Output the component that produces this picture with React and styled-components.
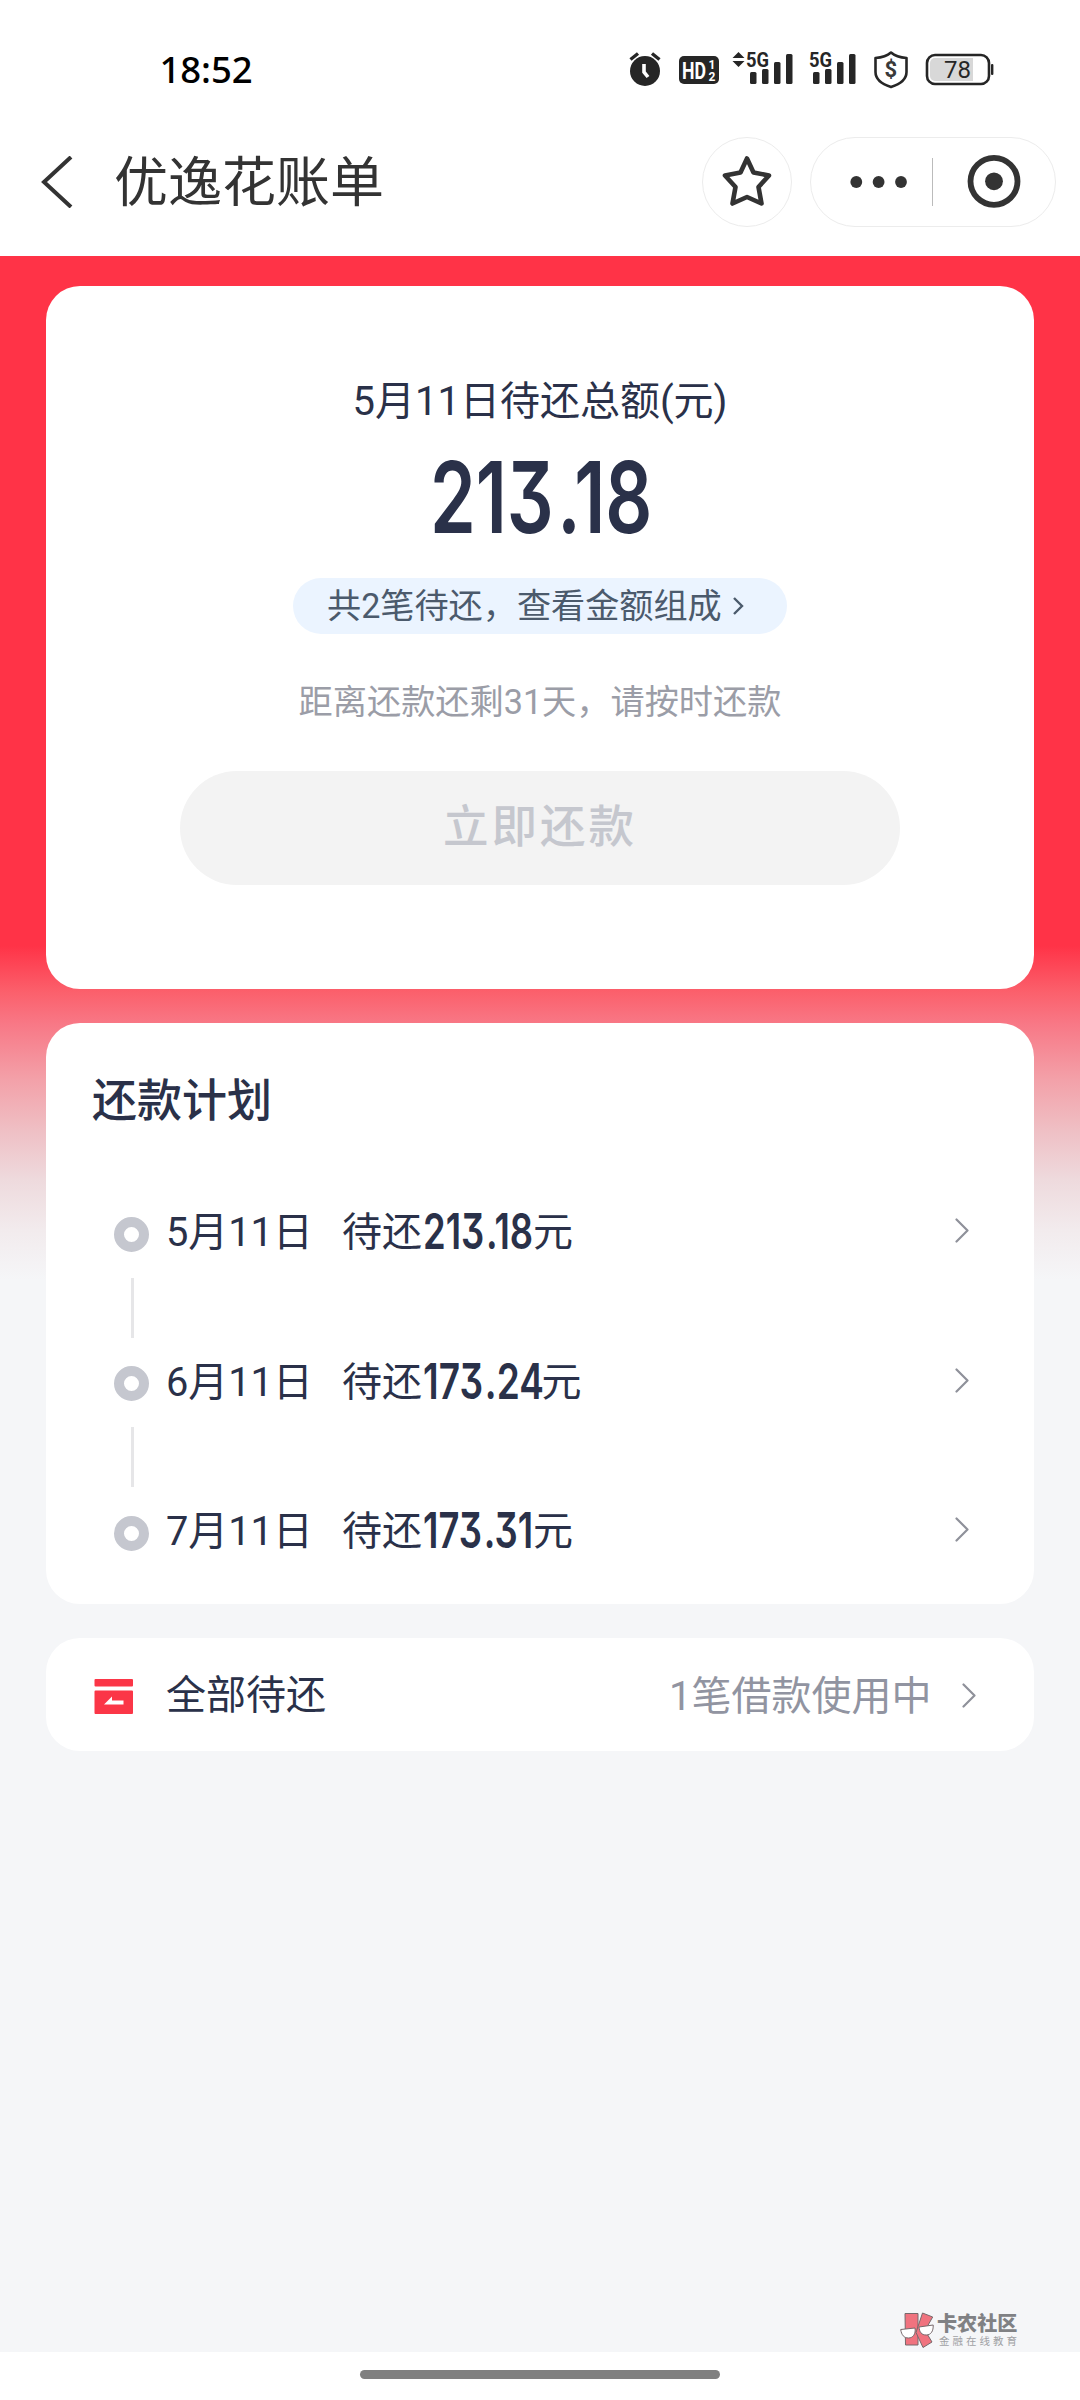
import React from "react";
import styled, { createGlobalStyle } from "styled-components";

const GlobalStyle = createGlobalStyle`
  * { box-sizing: border-box; }
  html, body { margin: 0; padding: 0; background: #fff; }
  body { font-family: Roboto, "Noto Sans CJK SC", sans-serif; color: #2a3149; }
`;

const Screen = styled.div`
  position: relative;
  width: 1080px;
  height: 2400px;
  display: flex;
  flex-direction: column;
  background: #fff;
  overflow: hidden;
`;

const StatusBar = styled.header`
  height: 137px;
  padding: 47px 84px 0 159.5px;
  display: flex;
  justify-content: space-between;
  align-items: flex-start;
`;

const Clock = styled.time`
  margin-top: -1px;
  font: 500 36.5px/46px "Noto Sans", sans-serif;
  letter-spacing: -0.1px;
  color: #000;
`;

const StatusIcons = styled.div`
  display: flex;
  height: 46px;
  svg { display: block; }
`;

const NavBar = styled.nav`
  height: 119px;
  padding: 0 24px 0 41px;
  display: flex;
  align-items: flex-start;
`;

const BackIcon = styled.svg`
  width: 32px;
  height: 52px;
  margin-top: 19px;
`;

const Title = styled.h1`
  flex: 1;
  margin: 2px 0 0 41px;
  font-weight: 400;
  font-size: 54px;
  line-height: 90px;
  color: #333;
`;

const RoundButton = styled.div`
  width: 90px;
  height: 90px;
  border: 1px solid #ececec;
  border-radius: 45px;
  svg { display: block; }
`;

const Capsule = styled(RoundButton)`
  width: 246px;
  margin-left: 18px;
`;

const Content = styled.main`
  height: 2096px;
  padding: 30px 46px 0;
  display: flex;
  flex-direction: column;
  gap: 34px;
  background: linear-gradient(
    180deg,
    #ff3347 0,
    #ff3347 690px,
    #fb5f6b 735px,
    #f87886 768px,
    #f3a1a9 824px,
    #efbfc4 874px,
    #eedadd 924px,
    #f2ebed 974px,
    #f5f6f8 1024px
  );
`;

const Card = styled.section`
  height: ${(p) => p.$height}px;
  border-radius: 34px;
  background: #fff;
  flex: none;
`;

const SummaryCard = styled(Card)`
  display: flex;
  flex-direction: column;
  align-items: center;
`;

const SummaryLabel = styled.p`
  margin: 86px 0 0;
  font-size: 40px;
  line-height: 60px;
`;

const TotalBox = styled.div`
  width: 220px;
  height: 72px;
  margin: 29px 0 45px;
  display: flex;
  align-items: center;
`;

const Amount = styled.span`
  flex: none;
  display: inline-block;
  white-space: nowrap;
  font-family: Inter, sans-serif;
  font-size: ${(p) => p.$size}px;
  line-height: 1;
  font-weight: 600;
  font-feature-settings: "cv09";
  transform: scaleX(${(p) => p.$squeeze});
  transform-origin: 0 50%;
`;

const Point = styled.span`
  margin: 0 0 0 0.05em;
`;

const Pill = styled.div`
  width: 494px;
  height: 56px;
  padding: 0 0 0 34px;
  display: flex;
  align-items: center;
  gap: 11px;
  border-radius: 28px;
  background: #ebf4ff;
  font-size: 34.15px;
  line-height: 57px;
  color: #4b5a6c;
`;

const Reminder = styled.p`
  margin: 43px 0 0;
  font-size: 34.2px;
  line-height: 50px;
  color: #9b9da7;
`;

const PayButton = styled.button`
  width: 720px;
  height: 114px;
  margin: 44px 0 0;
  padding: 0 0 1px 0;
  border: 0;
  border-radius: 57px;
  background: #f3f3f3;
  font: 500 45.5px/60px Roboto, "Noto Sans CJK SC", sans-serif;
  letter-spacing: 3px;
  color: #c5c7ce;
`;

const PlanTitle = styled.h2`
  margin: 0;
  padding: 47px 0 0 46px;
  font-size: 45px;
  line-height: 64px;
  font-weight: 500;
`;

const Timeline = styled.ol`
  list-style: none;
  margin: 0;
  padding: 63px 65px 0 67px;
`;

const PlanRow = styled.li`
  height: 149.5px;
  display: flex;
  align-items: flex-start;
`;

const Rail = styled.div`
  width: 36px;
  padding-top: 19.5px;
  display: flex;
  flex-direction: column;
  align-items: center;
`;

const Dot = styled.span`
  width: 35px;
  height: 35px;
  border: 10.5px solid #c5c7cf;
  border-radius: 50%;
`;

const Stem = styled.span`
  width: 3px;
  height: 60px;
  margin-top: 26px;
  margin-left: 3px;
  background: #e6e6e8;
`;

const DueDate = styled.span`
  width: 176px;
  margin-left: 17px;
  font-size: 39.8px;
  line-height: 72px;
`;

const DueAmount = styled.span`
  flex: 1;
  display: flex;
  align-items: center;
  font-size: 40px;
  line-height: 72px;
`;

const AmountSlot = styled.span`
  width: ${(p) => p.$width}px;
  padding: 0 0 2px 1px;
  display: flex;
  overflow: visible;
`;

const RowArrow = styled.svg`
  width: 14px;
  height: 26px;
  flex: none;
  margin-top: ${(p) => p.$top || 0}px;
`;

const AllCard = styled(Card)`
  display: flex;
  align-items: center;
  padding: 2px 58.5px 0 48px;
  font-size: 40px;
  line-height: 60px;
`;

const CardIcon = styled.svg`
  width: 39px;
  height: 35px;
  margin-top: 1px;
`;

const AllLabel = styled.span`
  flex: 1;
  margin-left: 33px;
`;

const AllStatus = styled.span`
  margin: 2px 30px 0 0;
  color: #9194a1;
`;

const HomeArea = styled.footer`
  flex: 1;
  display: flex;
  justify-content: center;
  padding-top: 18px;
`;

const HomeBar = styled.span`
  width: 360px;
  height: 9px;
  border-radius: 5px;
  background: #808080;
`;

const Watermark = styled.aside`
  position: absolute;
  left: 900px;
  top: 2311px;
  display: flex;
  gap: 2px;
`;

const WatermarkText = styled.div`
  display: flex;
  flex-direction: column;
  white-space: nowrap;
  padding-top: 1px;
`;

const WatermarkName = styled.strong`
  font-size: 20.1px;
  line-height: 24px;
  font-weight: 900;
  color: #808184;
`;

const WatermarkTag = styled.span`
  padding-left: 2px;
  font-size: 10.5px;
  line-height: 12px;
  letter-spacing: 3px;
  color: #a0a1a4;
`;

function Signal({ x }) {
  return (
    <g>
      <text x={x - 4} y="20" fontSize="21" fontWeight="700" textLength="23" lengthAdjust="spacingAndGlyphs">5G</text>
      <rect x={x} y="25" width="6.5" height="12" rx="1.5" />
      <rect x={x + 12} y="22" width="6.5" height="15" rx="1.5" />
      <rect x={x + 24} y="15" width="6.5" height="22" rx="1.5" />
      <rect x={x + 36} y="7" width="6.5" height="30" rx="1.5" />
    </g>
  );
}

function StatusGlyphs() {
  return (
    <svg width="368" height="46" viewBox="0 0 368 46" fill="#262626" fontFamily="Roboto, sans-serif">
      <circle cx="17" cy="24" r="15" />
      <path d="M2.5 12.5 10 6.5M31.5 12.5 24 6.5" stroke="#262626" strokeWidth="3.4" />
      <path d="M16 17v8l4 5" stroke="#fff" strokeWidth="3.6" fill="none" />
      <rect x="51" y="9" width="40" height="28" rx="5" />
      <text x="54" y="31.5" fontSize="23" fontWeight="700" fill="#fff" textLength="24" lengthAdjust="spacingAndGlyphs">HD</text>
      <text x="80.5" y="21.5" fontSize="12" fontWeight="700" fill="#fff">1</text>
      <text x="80.5" y="34" fontSize="12" fontWeight="700" fill="#fff">2</text>
      <path d="m110.500 5 6 6h-12zM110.500 20l6-6h-12z" />
      <Signal x={122} />
      <Signal x={185} />
      <path d="M263 5.500c4 3.500 9 5 15.500 5.500v14c0 7-6 12-15.500 15-9.500-3-15.500-8-15.500-15V11c6.500-.5 11.500-2 15.500-5.500z" fill="none" stroke="#262626" strokeWidth="2.6" strokeLinejoin="round" />
      <text x="256.500" y="30" fontSize="22" fontWeight="700" fill="#3a3a3a">$</text>
      <rect x="299" y="8" width="62" height="29" rx="8" fill="#fff" stroke="#262626" strokeWidth="2.600" />
      <path d="M307 11h38v23h-38a5 5 0 0 1-5-5V16a5 5 0 0 1 5-5z" fill="#d8d8d8" />
      <rect x="363" y="17" width="2.400" height="11" rx="1" />
      <text x="316" y="31" fontSize="24">78</text>
    </svg>
  );
}

function Arrow({ top }) {
  return (
    <RowArrow $top={top} viewBox="0 0 14 26" fill="none" stroke="#8f919a" strokeWidth="2.200" strokeLinecap="round" strokeLinejoin="round">
      <path d="M1.500 1.500 12.500 12.500 1.500 23.500" />
    </RowArrow>
  );
}

function Money({ value, size, squeeze }) {
  const [whole, cents] = value.split(".");
  return (
    <Amount $size={size} $squeeze={squeeze}>
      {whole}<Point>.</Point>{cents}
    </Amount>
  );
}

const plan = [
  { date: "5月11日", amount: "213.18", width: 111, squeeze: 0.735 },
  { date: "6月11日", amount: "173.24", width: 119.5, squeeze: 0.748 },
  { date: "7月11日", amount: "173.31", width: 111, squeeze: 0.735 },
];

export default function App() {
  return (
    <Screen>
      <GlobalStyle />
      <StatusBar>
        <Clock>18:52</Clock>
        <StatusIcons><StatusGlyphs /></StatusIcons>
      </StatusBar>
      <NavBar>
        <BackIcon viewBox="0 0 32 52" fill="none" stroke="#333" strokeWidth="4">
          <path d="M30 1 3 26l27 25" />
        </BackIcon>
        <Title>优逸花账单</Title>
        <RoundButton>
          <svg width="88" height="88" viewBox="703 138 88 88" fill="none" stroke="#333" strokeWidth="4.600" strokeLinejoin="round">
            <path d="M747 158.500 753.500 172.500 769 175.500 758.500 187 761.500 203.500 747 197 732.500 203.500 735.500 187 725 175.500 740.500 172.500z" />
          </svg>
        </RoundButton>
        <Capsule>
          <svg width="244" height="88" viewBox="811 138 244 88" fill="#333">
            <circle cx="856.300" cy="182" r="5.900" />
            <circle cx="878.600" cy="182" r="5.900" />
            <circle cx="901" cy="182" r="5.900" />
            <rect x="932" y="158" width="1" height="48" fill="#bbb" />
            <circle cx="994" cy="181.300" r="23.500" fill="none" stroke="#333" strokeWidth="5.800" />
            <circle cx="994" cy="181.300" r="8.900" />
          </svg>
        </Capsule>
      </NavBar>
      <Content>
        <SummaryCard $height={703}>
          <SummaryLabel>5月11日待还总额(元)</SummaryLabel>
          <TotalBox><Money value="213.18" size={99} squeeze={0.742} /></TotalBox>
          <Pill>
            共2笔待还，查看金额组成
            <svg width="11" height="18" viewBox="0 0 11 18" fill="none" stroke="#4b5a6c" strokeWidth="2.400">
              <path d="m1 1 8 8-8 8" />
            </svg>
          </Pill>
          <Reminder>距离还款还剩31天，请按时还款</Reminder>
          <PayButton>立即还款</PayButton>
        </SummaryCard>
        <Card $height={581}>
          <PlanTitle>还款计划</PlanTitle>
          <Timeline>
            {plan.map((item, i) => (
              <PlanRow key={item.date}>
                <Rail>
                  <Dot />
                  {i < plan.length - 1 && <Stem />}
                </Rail>
                <DueDate>{item.date}</DueDate>
                <DueAmount>
                  待还
                  <AmountSlot $width={item.width}>
                    <Money value={item.amount} size={49.5} squeeze={item.squeeze} />
                  </AmountSlot>
                  元
                </DueAmount>
                <Arrow top={21} />
              </PlanRow>
            ))}
          </Timeline>
        </Card>
        <AllCard $height={113}>
          <CardIcon viewBox="0 0 39 35" fill="#fb3647">
            <rect x=".5" width="38.500" height="7.500" rx="1" />
            <path d="M1.500 11.500H38a1 1 0 0 1 1 1V34a1 1 0 0 1-1 1H1.500a1 1 0 0 1-1-1V12.500a1 1 0 0 1 1-1z" />
            <path d="M10 25.500h19.500v-4H18v-4z" fill="#fff" />
          </CardIcon>
          <AllLabel>全部待还</AllLabel>
          <AllStatus>1笔借款使用中</AllStatus>
          <Arrow />
        </AllCard>
      </Content>
      <HomeArea><HomeBar /></HomeArea>
      <Watermark>
        <svg width="35" height="38" viewBox="0 0 35 38" fill="#f0737f" stroke="#77696c" strokeWidth="1" strokeLinejoin="round">
          <path d="M5 2.500h13v31.500H5.500z" />
          <path d="M22.500 2 32.700 6 25 19.500l7 11.500-9 5.500-7-15z" />
          <path d="M.7 18.500 15 17c1 6-2 10-6.500 10S1.500 24 .7 18.500zM19 16 33.200 14c.3 6-2.200 10-7 10S19.500 21 19 16z" fill="#fff" />
        </svg>
        <WatermarkText>
          <WatermarkName>卡农社区</WatermarkName>
          <WatermarkTag>金融在线教育</WatermarkTag>
        </WatermarkText>
      </Watermark>
    </Screen>
  );
}
